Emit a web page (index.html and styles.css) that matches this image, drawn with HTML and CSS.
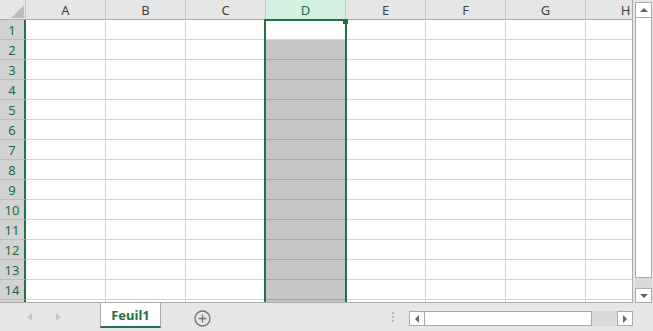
FILE: index.html
```html
<!DOCTYPE html>
<html lang="fr">
<head>
    <meta charset="UTF-8">
    <title>Feuil1</title>
    <link rel="stylesheet" href="styles.css">
</head>
<body>
    <div id="app">
        <div class="main">
            <div class="sheet">
                <div class="grid" id="grid"></div>
                <div class="selection"><span class="handle"></span></div>
            </div>
            <div class="vscroll">
                <div class="sb-btn"><span class="tri tri-up"></span></div>
                <div class="v-thumb"></div>
                <div class="v-track"></div>
                <div class="sb-btn v-down"><span class="tri tri-down"></span></div>
            </div>
        </div>
        <div class="tabbar">
            <div class="nav">
                <span class="nav-tri nav-left"></span>
                <span class="nav-tri nav-right"></span>
            </div>
            <div class="tab">Feuil1</div>
            <div class="add">
                <svg width="17" height="17" viewBox="0 0 17 17">
                    <circle cx="8.5" cy="8.5" r="7.5" fill="none" stroke="#737373" stroke-width="1.3"/>
                    <path d="M8.5 4.5v8M4.5 8.5h8" stroke="#737373" stroke-width="1.3"/>
                </svg>
            </div>
            <div class="spacer"></div>
            <div class="grip"><i></i><i></i><i></i></div>
            <div class="hscroll">
                <div class="sb-btn h-btn"><span class="tri tri-left"></span></div>
                <div class="h-thumb"></div>
                <div class="h-track"></div>
                <div class="sb-btn h-btn"><span class="tri tri-right"></span></div>
            </div>
        </div>
    </div>

    <script>
        const grid = document.getElementById("grid");
        const cols = ["A", "B", "C", "D", "E", "F", "G", "H"];

        function cell(cls, text) {
            const el = document.createElement("div");
            el.className = cls;
            if (text) el.textContent = text;
            grid.appendChild(el);
        }

        // header row
        const corner = document.createElement("div");
        corner.className = "corner";
        corner.innerHTML = '<span class="corner-tri"></span>';
        grid.appendChild(corner);
        cols.forEach(c => cell(c === "D" ? "ch ch-sel" : "ch", c));

        // rows (15th is only a sliver at the bottom edge, so no label)
        for (let r = 1; r <= 15; r++) {
            cell("rh", r < 15 ? String(r) : "");
            cols.forEach(c => {
                if (c === "D" && r > 1) cell("c c-sel");
                else cell("c");
            });
        }
    </script>
</body>
</html>
```

FILE: styles.css
```css
/* Reset */
* {
    margin: 0;
    padding: 0;
    box-sizing: border-box;
}

body {
    background: #e6e6e6;
    font-family: "Noto Sans", sans-serif;
    width: 653px;
    height: 331px;
    overflow: hidden;
}

#app {
    display: flex;
    flex-direction: column;
    height: 331px;
}

/* Sheet area */
.main {
    display: flex;
    height: 303px;
}

.sheet {
    position: relative;
    width: 633px;
    height: 303px;
    background: #fff;
    border-right: 1px solid #ababab;
    border-bottom: 1px solid #ababab;
    overflow: hidden;
}

.grid {
    display: grid;
    grid-template-columns: 26px repeat(8, 80px);
    grid-auto-rows: 20px;
}

.corner {
    background: #e6e6e6;
    border-right: 1px solid #c8c8c8;
    border-bottom: 1px solid #ababab;
    display: flex;
    justify-content: flex-end;
    align-items: flex-end;
    padding: 0 1px 1px 0;
}

.corner-tri {
    width: 0;
    height: 0;
    border-left: 13px solid transparent;
    border-bottom: 13px solid #bdbdbd;
}

.ch {
    background: #e6e6e6;
    border-right: 1px solid #c8c8c8;
    border-bottom: 1px solid #ababab;
    color: #444;
    font-size: 13px;
    display: flex;
    align-items: center;
    justify-content: center;
}

.ch-sel {
    background: #d3f0e0;
    color: #1e6b41;
}

.rh {
    background: #d2d2d2;
    border-right: 2px solid #217346;
    border-bottom: 1px solid #bdbdbd;
    color: #1e6b41;
    font-size: 13px;
    display: flex;
    align-items: center;
    justify-content: center;
}

.c {
    border-right: 1px solid #d4d4d4;
    border-bottom: 1px solid #d4d4d4;
}

.c-sel {
    background: #c6c6c6;
    border-bottom-color: #a6a6a6;
}

/* Selection box over column D */
.selection {
    position: absolute;
    left: 264px;
    top: 19px;
    width: 83px;
    height: 290px;
    border: 2px solid #217346;
    border-bottom: none;
    pointer-events: none;
}

.handle {
    position: absolute;
    left: 77px;
    top: -2px;
    width: 5px;
    height: 5px;
    background: #217346;
}

/* Scrollbars */
.sb-btn {
    background: #fff;
    border: 1px solid #ababab;
    display: flex;
    align-items: center;
    justify-content: center;
}

.tri {
    width: 0;
    height: 0;
}

.tri-up {
    border-left: 4px solid transparent;
    border-right: 4px solid transparent;
    border-bottom: 4px solid #666;
}

.tri-down {
    border-left: 4px solid transparent;
    border-right: 4px solid transparent;
    border-top: 4px solid #666;
}

.tri-left {
    border-top: 4px solid transparent;
    border-bottom: 4px solid transparent;
    border-right: 4px solid #666;
}

.tri-right {
    border-top: 4px solid transparent;
    border-bottom: 4px solid transparent;
    border-left: 4px solid #666;
}

.vscroll {
    width: 20px;
    padding: 2px 1px 0 2px;
    display: flex;
    flex-direction: column;
}

.vscroll .sb-btn {
    height: 16px;
}

.v-thumb {
    height: 261px;
    margin-top: -1px;
    background: #fff;
    border: 1px solid #ababab;
}

.v-track {
    flex: 1;
    background: #dadada;
}

.vscroll .v-down {
    height: 15px;
}

/* Tab bar */
.tabbar {
    flex: 1;
    display: flex;
    align-items: flex-start;
}

.nav {
    width: 100px;
    display: flex;
    gap: 24px;
    padding: 10px 0 0 27px;
}

.nav-tri {
    width: 0;
    height: 0;
    border-top: 4px solid transparent;
    border-bottom: 4px solid transparent;
}

.nav-left {
    border-right: 5px solid #c8c8c8;
}

.nav-right {
    border-left: 5px solid #c8c8c8;
}

.tab {
    width: 61px;
    height: 25px;
    background: #fff;
    border-left: 1px solid #ababab;
    border-right: 1px solid #ababab;
    border-bottom: 2px solid #217346;
    color: #217346;
    font-size: 13px;
    font-weight: bold;
    display: flex;
    align-items: center;
    justify-content: center;
}

.add {
    margin: 7px 0 0 33px;
    height: 17px;
}

.spacer {
    flex: 1;
}

.grip {
    width: 2px;
    margin: 9px 15px 0 0;
    display: flex;
    flex-direction: column;
    gap: 2px;
}

.grip i {
    width: 2px;
    height: 2px;
    background: #b4b4b4;
}

.hscroll {
    width: 224px;
    height: 15px;
    margin: 8px 20px 0 0;
    display: flex;
}

.h-btn {
    width: 16px;
}

.h-thumb {
    width: 168px;
    margin-left: -1px;
    background: #fff;
    border: 1px solid #ababab;
}

.h-track {
    flex: 1;
    background: #dadada;
}
```
